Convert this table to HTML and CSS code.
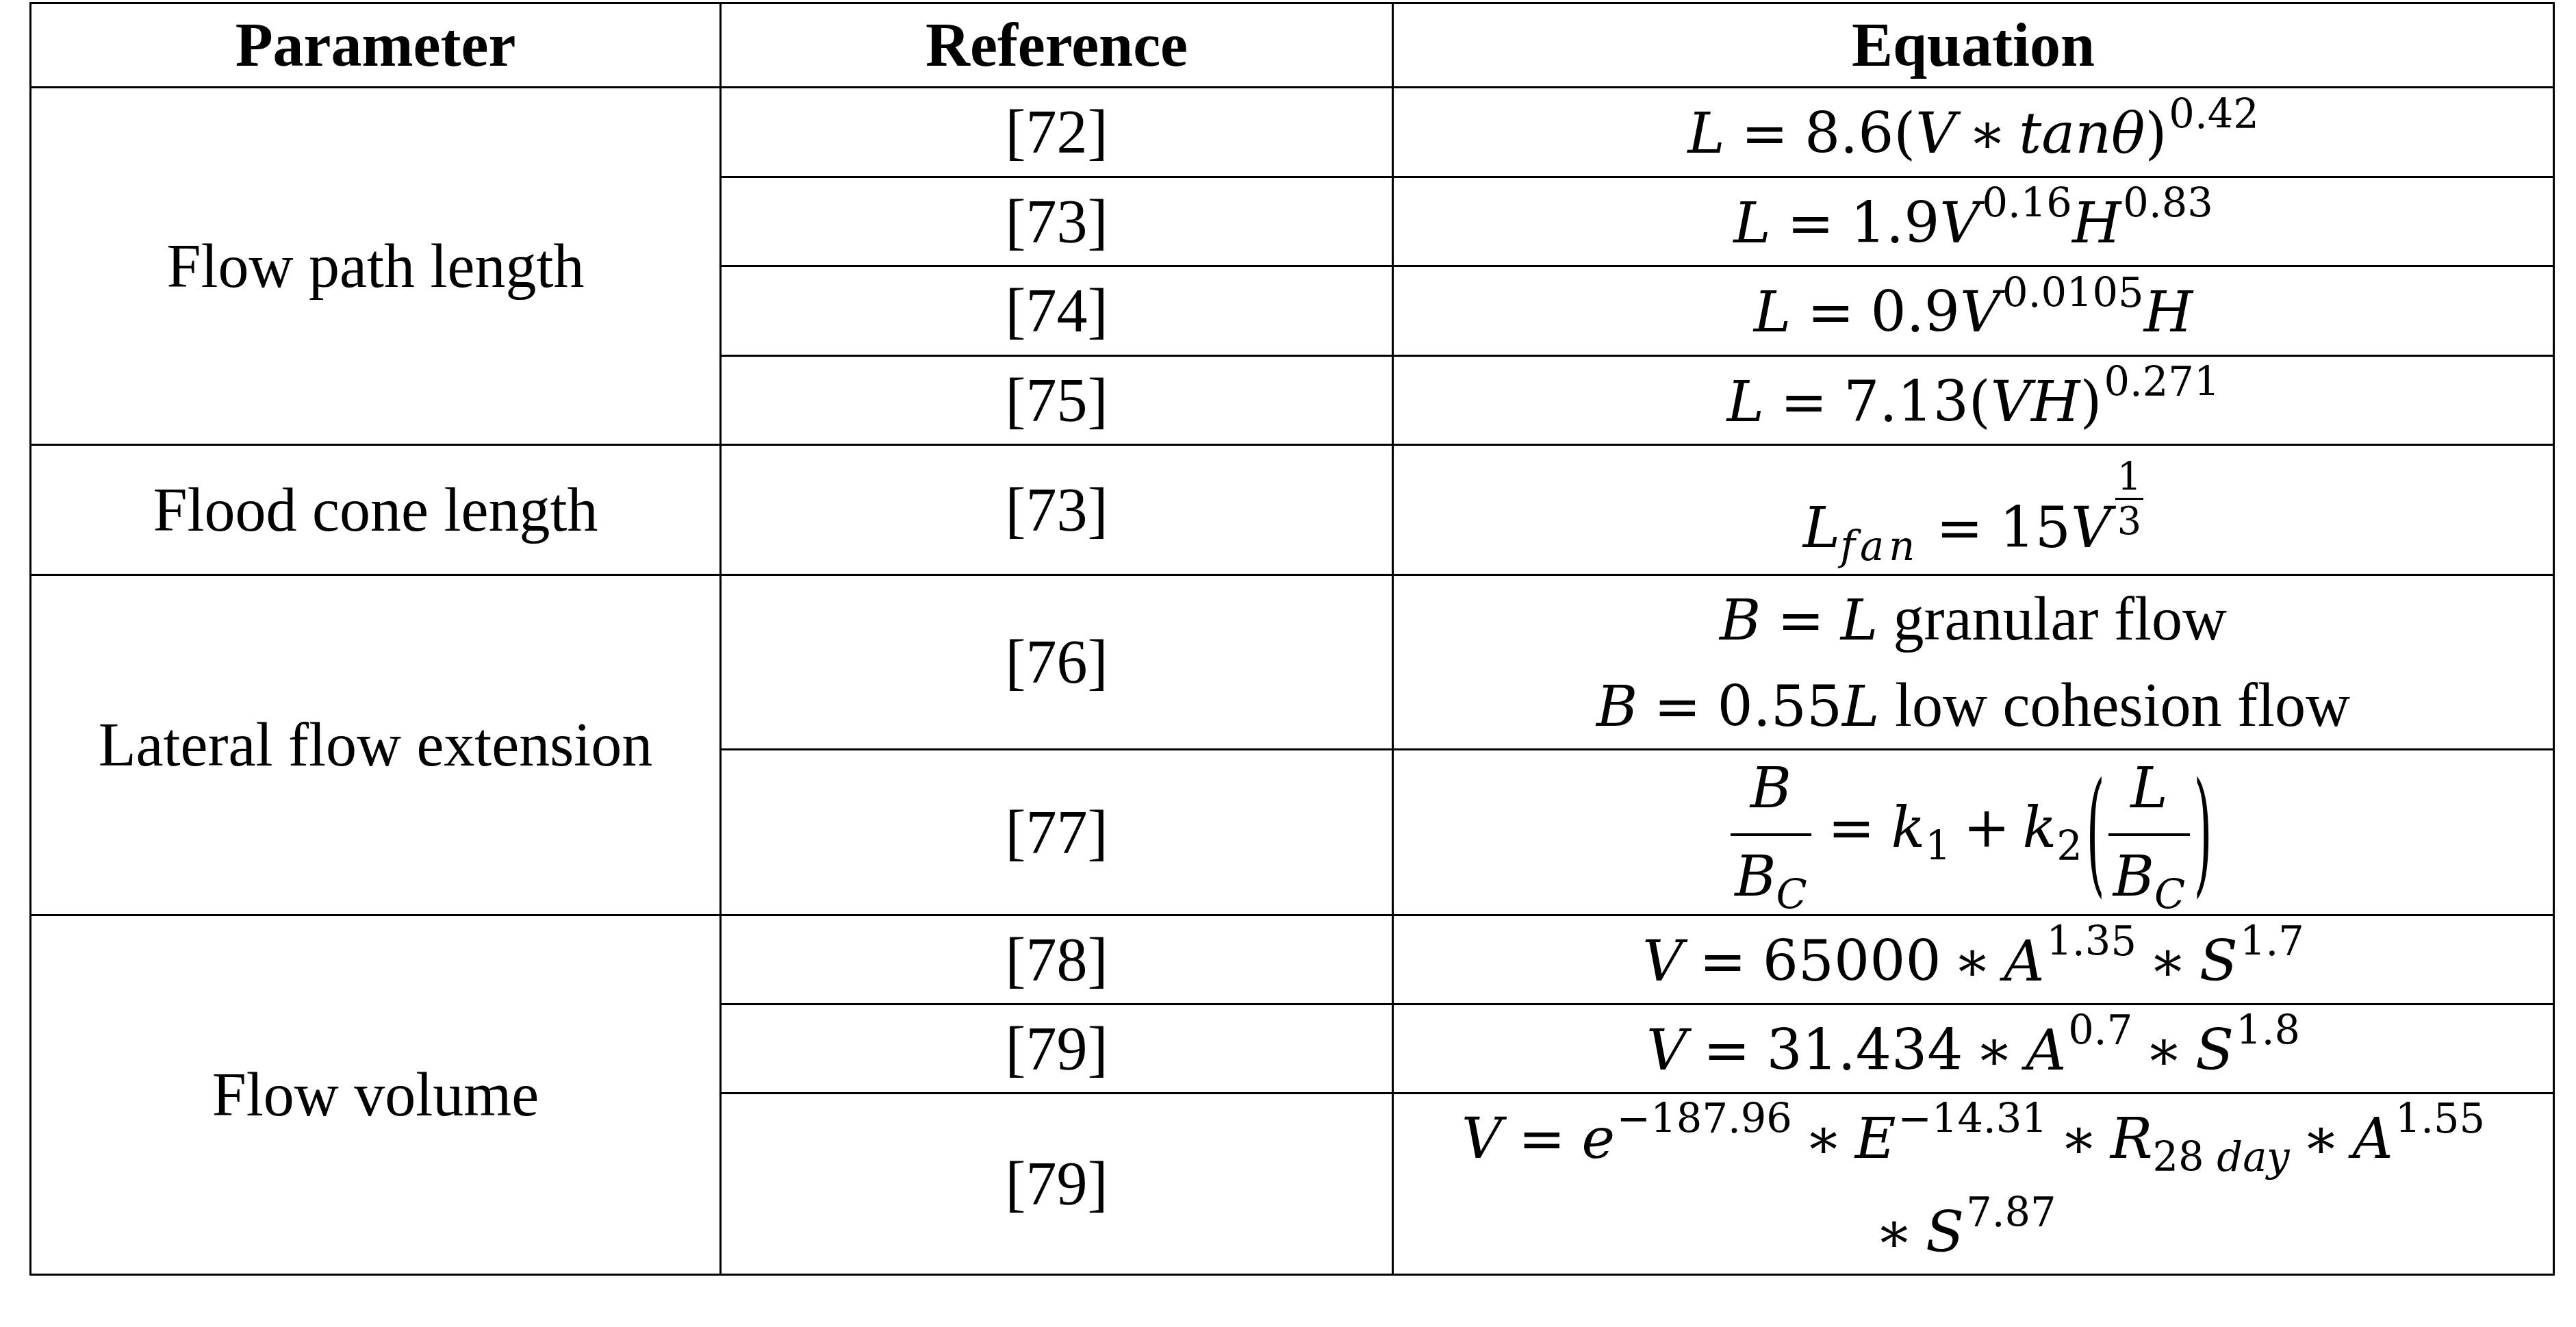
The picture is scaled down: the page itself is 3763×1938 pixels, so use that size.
FILE: index.html
```html
<!DOCTYPE html>
<html lang="en">
<head>
<meta charset="utf-8">
<title>Parameter equations</title>
<link rel="stylesheet" href="styles.css">
</head>
<body>
<table class="tbl">
  <colgroup><col class="c1"><col class="c2"><col class="c3"></colgroup>
  <thead>
    <tr class="rh"><th>Parameter</th><th>Reference</th><th>Equation</th></tr>
  </thead>
  <tbody>
    <tr class="r131">
      <td rowspan="4">Flow path length</td>
      <td>[72]</td>
      <td><span class="m"><i>L</i><span class="o">=</span>8.6(<i>V</i><span class="b">∗</span><i>tanθ</i>)<sup>0.42</sup></span></td>
    </tr>
    <tr class="r130">
      <td>[73]</td>
      <td><span class="m"><i>L</i><span class="o">=</span>1.9<i>V</i><sup>0.16</sup><i>H</i><sup>0.83</sup></span></td>
    </tr>
    <tr class="r131">
      <td>[74]</td>
      <td><span class="m"><i>L</i><span class="o">=</span>0.9<i>V</i><sup>0.0105</sup><i>H</i></span></td>
    </tr>
    <tr class="r130">
      <td>[75]</td>
      <td><span class="m"><i>L</i><span class="o">=</span>7.13(<i>VH</i>)<sup>0.271</sup></span></td>
    </tr>
    <tr class="r190">
      <td>Flood cone length</td>
      <td>[73]</td>
      <td><span class="m"><i>L</i><sub class="wide"><i>fan</i></sub><span class="o">=</span>15<i>V</i><span class="sfrac"><span class="sn">1</span><span class="sd">3</span></span></span></td>
    </tr>
    <tr class="r255">
      <td rowspan="2">Lateral flow extension</td>
      <td>[76]</td>
      <td class="two">
        <div class="ln"><span class="m"><i>B</i><span class="o">=</span><i>L</i></span> granular flow</div>
        <div class="ln"><span class="m"><i>B</i><span class="o">=</span>0.55<i>L</i></span> low cohesion flow</div>
      </td>
    </tr>
    <tr class="r242">
      <td>[77]</td>
      <td><span class="m"><span class="frac"><span class="fn"><i>B</i></span><span class="fd"><i>B</i><sub><i>C</i></sub></span></span><span class="o">=</span><i>k</i><sub>1</sub><span class="b">+</span><i>k</i><sub>2</sub><span class="bigp">(</span><span class="frac"><span class="fn"><i>L</i></span><span class="fd"><i>B</i><sub><i>C</i></sub></span></span><span class="bigp">)</span></span></td>
    </tr>
    <tr class="r130">
      <td rowspan="3">Flow volume</td>
      <td>[78]</td>
      <td><span class="m"><i>V</i><span class="o">=</span>65000<span class="b">∗</span><i>A</i><sup>1.35</sup><span class="b">∗</span><i>S</i><sup>1.7</sup></span></td>
    </tr>
    <tr class="r130">
      <td>[79]</td>
      <td><span class="m"><i>V</i><span class="o">=</span>31.434<span class="b">∗</span><i>A</i><sup>0.7</sup><span class="b">∗</span><i>S</i><sup>1.8</sup></span></td>
    </tr>
    <tr class="r264">
      <td>[79]</td>
      <td class="two wrap">
        <div class="ln"><span class="m"><i>V</i><span class="o">=</span><i>e</i><sup>−187.96</sup><span class="b">∗</span><i>E</i><sup>−14.31</sup><span class="b">∗</span><i>R</i><sub>28 <i>day</i></sub><span class="b">∗</span><i>A</i><sup>1.55</sup></span></div>
        <div class="ln shift"><span class="m"><span class="b">∗</span><i>S</i><sup>7.87</sup></span></div>
      </td>
    </tr>
  </tbody>
</table>
</body>
</html>
```

FILE: styles.css
```css
html, body {
  margin: 0;
  padding: 0;
  background: #ffffff;
}

body {
  font-family: "Liberation Serif", "Times New Roman", serif;
  font-size: 90px;
  color: #000000;
}

.tbl {
  border-collapse: collapse;
  margin: 3px 0 0 43px;
  width: 3686px;
  table-layout: fixed;
}

.c1 { width: 1008px; }
.c2 { width: 982px; }
.c3 { width: 1696px; }

.tbl th,
.tbl td {
  border: 3px solid #000000;
  padding: 0;
  text-align: center;
  vertical-align: middle;
  line-height: 1.15;
  white-space: nowrap;
}

.tbl th {
  font-weight: bold;
}

.rh { height: 123px; }
.r130 { height: 130px; }
.r131 { height: 131px; }
.r190 { height: 190px; }
.r242 { height: 242px; }
.r255 { height: 255px; }
.r264 { height: 264px; }

/* math */
.m {
  font-family: "DejaVu Serif", serif;
  font-size: 82px;
  line-height: 1;
  white-space: nowrap;
}

.m i {
  font-style: italic;
}

.m sup {
  font-size: 0.72em;
  vertical-align: 0.62em;
  line-height: 0;
  margin-left: 0.05em;
}

.m sub {
  font-size: 0.72em;
  vertical-align: -0.32em;
  line-height: 0;
}

.m sub.wide {
  letter-spacing: 0.12em;
}

.o {
  margin: 0 0.29em;
}

.b {
  margin: 0 0.22em;
}

/* stacked 1/3 exponent */
.sfrac {
  display: inline-flex;
  flex-direction: column;
  align-items: center;
  font-size: 0.68em;
  line-height: 1;
  vertical-align: 1.5em;
  margin-left: 0.1em;
}

.sfrac .sn {
  padding: 0 3px 3px;
  border-bottom: 3px solid #000000;
}

.sfrac .sd {
  padding-top: 3px;
}

/* display fractions */
.frac {
  display: inline-flex;
  flex-direction: column;
  align-items: center;
  vertical-align: middle;
  line-height: 1;
}

.frac .fn {
  align-self: stretch;
  text-align: center;
  padding: 0 0.08em 0.3em;
  border-bottom: 4px solid #000000;
}

.frac .fd {
  padding: 0.22em 0.08em 0;
}

.bigp {
  display: inline-block;
  transform: scale(0.85, 2.4);
  vertical-align: middle;
  line-height: 1;
  margin: 0 0.04em;
}

/* two-line equation cells */
.two .ln {
  line-height: 126px;
}

.wrap .ln {
  line-height: 125px;
}

.wrap .ln + .ln {
  margin-top: 12px;
}

.wrap .shift {
  padding-right: 40px;
}
```
